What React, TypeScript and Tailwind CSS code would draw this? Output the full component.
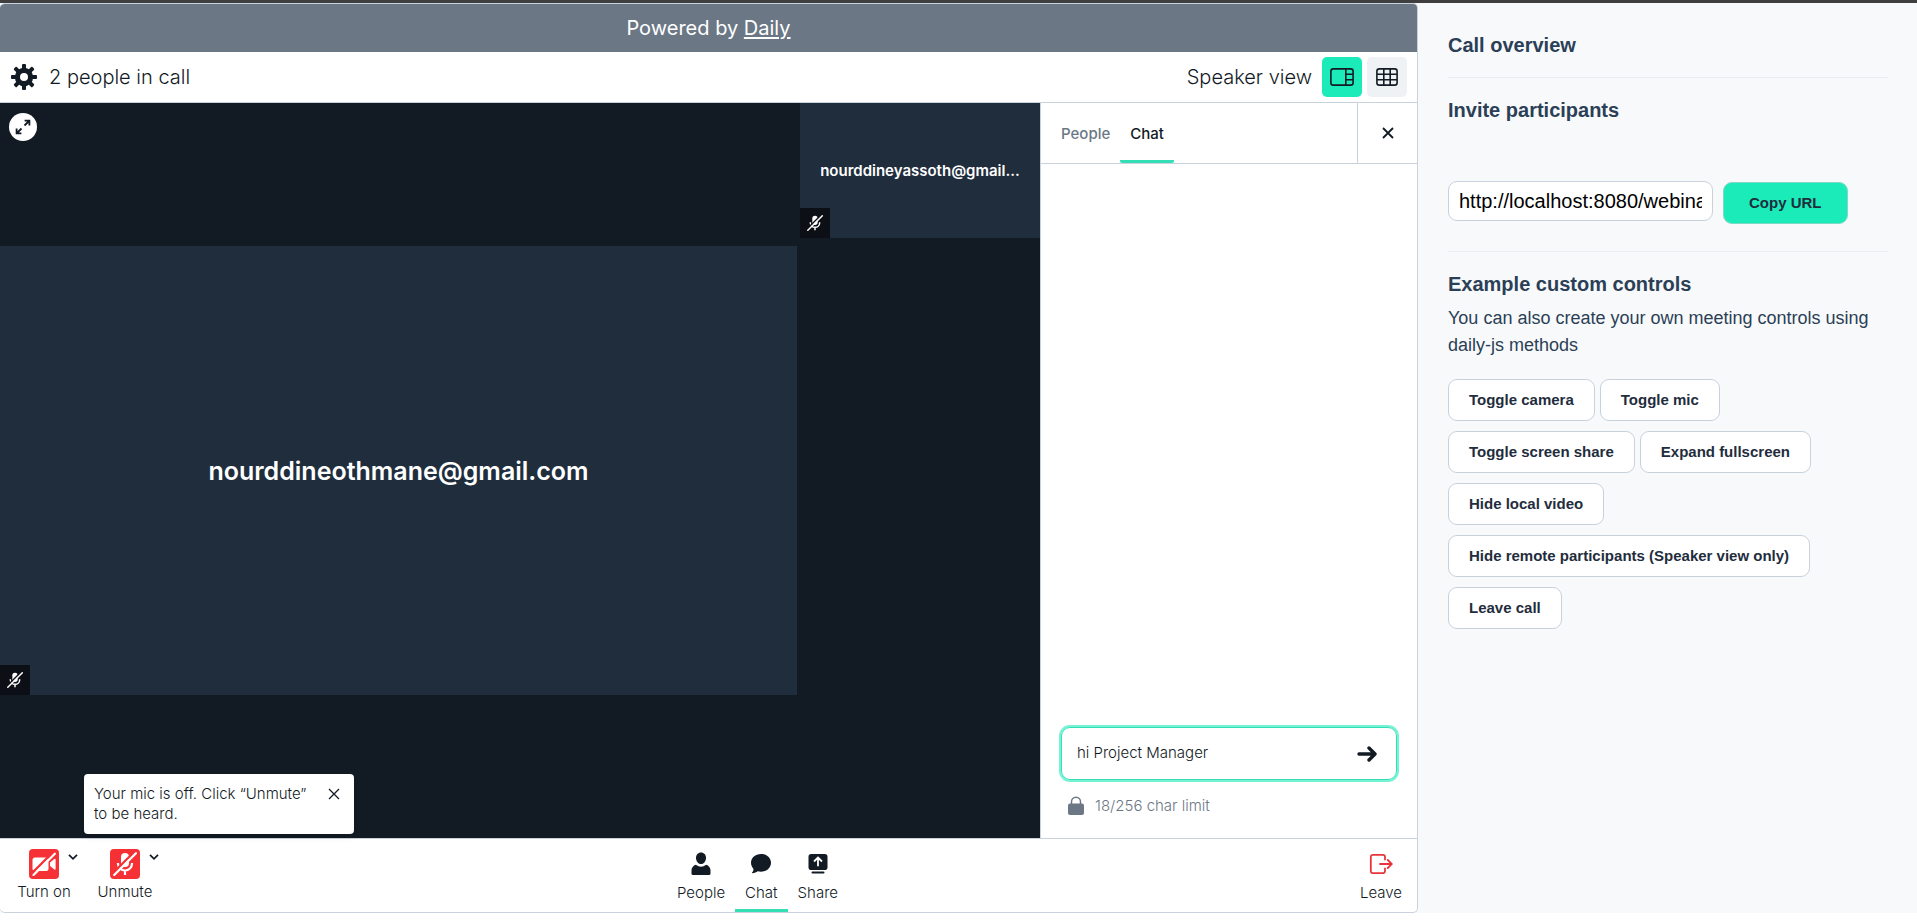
import { useState, type ReactNode } from 'react';

function GearIcon() {
  const teeth = [0, 45, 90, 135, 180, 225, 270, 315];
  return (
    <svg className="size-[26px]" viewBox="0 0 26 26" fill="#121a24" aria-hidden="true">
      {teeth.map((angle) => (
        <rect key={angle} x="11" y="0" width="4" height="6" rx="1" transform={`rotate(${angle} 13 13)`} />
      ))}
      <path
        fillRule="evenodd"
        d="M13 3.8a9.2 9.2 0 1 0 0 18.4a9.2 9.2 0 0 0 0-18.4ZM13 9a4 4 0 1 1 0 8a4 4 0 0 1 0-8Z"
      />
    </svg>
  );
}

function ExpandIcon() {
  return (
    <svg className="size-4" viewBox="0 0 16 16" fill="none" stroke="#121a24" strokeWidth="1.8" aria-hidden="true">
      <path d="M9.5 6.5 14 2M9.6 1.6h4.8v4.8M6.5 9.5 2 14M1.6 9.6v4.8h4.8" />
    </svg>
  );
}

function SpeakerViewIcon() {
  return (
    <svg className="h-[18px] w-6" viewBox="0 0 24 18" fill="none" stroke="#121a24" strokeWidth="1.6" aria-hidden="true">
      <rect x="0.9" y="0.9" width="22.2" height="16.2" rx="2.4" />
      <path d="M15.8 1v16M16 6.3h7M16 11.7h7" />
    </svg>
  );
}

function GridViewIcon() {
  return (
    <svg className="h-[18px] w-[22px]" viewBox="0 0 22 18" fill="none" stroke="#121a24" strokeWidth="1.6" aria-hidden="true">
      <rect x="0.9" y="0.9" width="20.2" height="16.2" rx="2.4" />
      <path d="M7.8 1v16M14.2 1v16M1 6.3h20M1 11.7h20" />
    </svg>
  );
}

function CloseIcon({ className, weight }: { className: string; weight: number }) {
  return (
    <svg className={className} viewBox="0 0 12 12" fill="none" stroke="#121a24" strokeWidth={weight} aria-hidden="true">
      <path d="m1 1 10 10M11 1 1 11" />
    </svg>
  );
}

function MicOffIcon({ className, background }: { className: string; background: string }) {
  return (
    <svg className={className} viewBox="0 0 24 24" fill="none" aria-hidden="true">
      <rect x="8" y="1" width="8" height="14" rx="4" fill="#fff" />
      <path d="M5 11v.5a7 7 0 0 0 14 0V11M12 18.5V23" stroke="#fff" strokeWidth="2.2" />
      <path d="M0 21.2 21.2 0" stroke={background} strokeWidth="2.4" />
      <path d="M1.2 23 23 1.2" stroke="#fff" strokeWidth="2.2" strokeLinecap="round" />
    </svg>
  );
}

function CameraOffIcon() {
  return (
    <svg className="size-6" viewBox="0 0 24 24" fill="none" aria-hidden="true">
      <rect x="0.5" y="5.5" width="16" height="13.5" rx="2.5" fill="#fff" />
      <path d="M18 10.5 22.3 7a.8.8 0 0 1 1.3.6v9.3a.8.8 0 0 1-1.3.6L18 14Z" fill="#fff" />
      <path d="M0 21.2 21.2 0" stroke="#f63135" strokeWidth="2.4" />
      <path d="M1.5 23 22.8 1.7" stroke="#fff" strokeWidth="2.2" strokeLinecap="round" />
    </svg>
  );
}

function ChevronIcon() {
  return (
    <svg className="h-[6px] w-[10px]" viewBox="0 0 10 6" fill="none" stroke="#121a24" strokeWidth="1.7" aria-hidden="true">
      <path d="m1 .8 4 4 4-4" />
    </svg>
  );
}

function PersonIcon() {
  return (
    <svg className="size-6" viewBox="0 0 24 24" fill="#121a24" aria-hidden="true">
      <path d="M12 .5c3 0 5 2.300 5 5.200 0 3.200-2 6.300-5 6.300S7 8.900 7 5.700C7 2.800 9 .5 12 .5Z" />
      <path d="M6.800 12.800a8.500 8.500 0 0 0 10.400 0c2.600.8 4.300 3 4.300 5.700v3.300c0 .7-.5 1.200-1.200 1.200H3.700c-.7 0-1.200-.5-1.200-1.200v-3.300c0-2.700 1.700-4.900 4.300-5.700Z" />
    </svg>
  );
}

function ChatIcon() {
  return (
    <svg className="size-6" viewBox="0 0 24 24" fill="#121a24" aria-hidden="true">
      <path d="M12 2c5.600 0 10 3.700 10 8.800s-4.400 8.900-10 8.900c-1.200 0-2.300-.1-3.300-.4-1.200 1-3.200 1.800-5.300 1.900-.4 0-.6-.4-.3-.7.9-1 1.400-2.300 1.400-3.600C3 15.300 2 13.200 2 10.800 2 5.700 6.400 2 12 2Z" />
    </svg>
  );
}

function ShareIcon() {
  return (
    <svg className="size-6" viewBox="0 0 24 24" fill="none" aria-hidden="true">
      <rect x="2.500" y="2" width="19" height="16" rx="2.800" fill="#121a24" />
      <path d="M12 14.300V6M8 9.500l4-4 4 4" stroke="#fff" strokeWidth="1.800" />
      <path d="M6.500 20.500h11" stroke="#121a24" strokeWidth="2" strokeLinecap="round" />
    </svg>
  );
}

function LeaveIcon() {
  return (
    <svg className="size-6" viewBox="0 0 24 24" fill="none" stroke="#e9343b" strokeWidth="1.8" strokeLinecap="round" aria-hidden="true">
      <path d="M16 7.500V5a2.200 2.200 0 0 0-2.200-2.200H4A2.200 2.200 0 0 0 1.800 5v14A2.200 2.200 0 0 0 4 21.200h9.800A2.200 2.200 0 0 0 16 19v-2.500" />
      <path d="M11 12h11.500M18.800 8l4 4-4 4" />
    </svg>
  );
}

function SendIcon() {
  return (
    <svg className="h-4 w-5" viewBox="0 0 20 16" fill="none" stroke="#121a24" strokeWidth="3.4" strokeLinecap="round" strokeLinejoin="round" aria-hidden="true">
      <path d="M2 8h15M12 2l6 6-6 6" />
    </svg>
  );
}

function LockIcon() {
  return (
    <svg className="h-5 w-4" viewBox="0 0 16 20" aria-hidden="true">
      <path d="M3.500 9V5.800a4.500 4.500 0 0 1 9 0V9" fill="none" stroke="#6b7785" strokeWidth="1.5" />
      <rect x="0" y="7.500" width="16" height="11.500" rx="2" fill="#6b7785" />
    </svg>
  );
}

function MutedBadge() {
  return (
    <span className="absolute bottom-0 left-0 flex size-[30px] items-center justify-center bg-[#0c1016]">
      <MicOffIcon className="size-4" background="#0c1016" />
    </span>
  );
}

function DeviceControl({ label, icon }: { label: string; icon: ReactNode }) {
  return (
    <div className="relative">
      <button type="button" className="flex w-16 flex-col items-center gap-[3px]">
        <span className="flex size-[30px] items-center justify-center rounded-[4px] bg-[#f63135]">{icon}</span>
        <span className="text-[15px] leading-5">{label}</span>
      </button>
      <button type="button" aria-label={`${label} options`} className="absolute top-0 left-[51px] flex h-4 w-5 items-center justify-center">
        <ChevronIcon />
      </button>
    </div>
  );
}

function TrayButton({ label, icon, active = false }: { label: string; icon: ReactNode; active?: boolean }) {
  return (
    <button
      type="button"
      className={`flex h-full flex-col items-center gap-[7px] border-b-[3px] px-[10px] pt-[13px] ${active ? 'border-[#35dfb6]' : 'border-transparent'}`}
    >
      {icon}
      <span className="text-[15px] leading-5">{label}</span>
    </button>
  );
}

function PanelButton({ children }: { children: ReactNode }) {
  return (
    <button type="button" className="h-[42px] rounded-[9px] border border-[#c8d1dc] bg-white px-5 text-[15px] font-bold text-[#1f2d3d]">
      {children}
    </button>
  );
}

function CallFrame() {
  const [message, setMessage] = useState('hi Project Manager');
  return (
    <main className="flex min-w-0 flex-1 flex-col overflow-hidden rounded-[5px] border-y border-r border-[#c8d1dc] bg-white font-['Inter','Liberation_Sans',sans-serif] font-light text-[#121a24]">
      <div className="flex h-12 shrink-0 items-center justify-center bg-[#6b7785] text-[20px] font-normal text-white">
        <p>
          Powered by{' '}
          <a href="#daily" className="underline underline-offset-2">
            Daily
          </a>
        </p>
      </div>

      <header className="flex h-[51px] shrink-0 items-center border-b border-[#c8d1dc] pr-[10px] pl-[11px] text-[20px]">
        <button type="button" aria-label="Settings">
          <GearIcon />
        </button>
        <p className="ml-3 flex-1">2 people in call</p>
        <p className="mr-[10px]">Speaker view</p>
        <button type="button" aria-label="Speaker view" className="mr-[5px] flex size-10 items-center justify-center rounded-[5px] bg-[#1bebb9]">
          <SpeakerViewIcon />
        </button>
        <button type="button" aria-label="Grid view" className="flex size-10 items-center justify-center rounded-[5px] bg-[#eff2f5]">
          <GridViewIcon />
        </button>
      </header>

      <div className="flex min-h-0 flex-1">
        <section aria-label="Video" className="relative flex min-w-0 flex-1 gap-[3px] bg-[#121a24] font-semibold text-white">
          <button type="button" aria-label="Fullscreen" className="absolute top-[10px] left-[9px] flex size-7 items-center justify-center rounded-full bg-white">
            <ExpandIcon />
          </button>
          <div className="flex min-w-0 flex-1 items-center">
            <div className="relative flex aspect-video w-full items-center justify-center bg-[#1f2d3d]">
              <p className="pt-[2px] text-[25px]">nourddineothmane@gmail.com</p>
              <MutedBadge />
            </div>
          </div>
          <div className="w-[240px] shrink-0">
            <div className="relative flex aspect-video w-full items-center justify-center bg-[#1f2d3d] px-4">
              <p className="truncate pt-[2px] text-[15px]">nourddineyassoth@gmail...</p>
              <MutedBadge />
            </div>
          </div>
        </section>

        <aside aria-label="Chat" className="flex w-[377px] shrink-0 flex-col border-l border-[#c8d1dc]">
          <div className="flex h-[61px] shrink-0 border-b border-[#c8d1dc] text-[15px] font-medium">
            <div className="flex flex-1 pl-[10px]">
              <button type="button" className="border-b-[3px] border-transparent px-[10px] pt-[5px] text-[#6b7785]">
                People
              </button>
              <button type="button" className="rounded-[2px] border-b-[3px] border-[#35dfb6] px-[10px] pt-[5px]">
                Chat
              </button>
            </div>
            <button type="button" aria-label="Close" className="flex w-[60px] items-center justify-center border-l border-[#c8d1dc]">
              <CloseIcon className="size-3" weight={1.8} />
            </button>
          </div>
          <div className="flex-1" />
          <form className="mx-5 flex h-[53px] items-center rounded-[9px] border border-[#35dfb6] pr-[19px] pl-[15px] ring-2 ring-[#76f3d5]" onSubmit={(e) => e.preventDefault()}>
            <input
              aria-label="Message"
              className="min-w-0 flex-1 bg-transparent text-[15px] font-light outline-none"
              value={message}
              onChange={(e) => setMessage(e.target.value)}
            />
            <button type="submit" aria-label="Send">
              <SendIcon />
            </button>
          </form>
          <div className="mt-4 mb-[22px] flex items-center gap-[11px] pl-[27px] text-[15px] leading-5 text-[#6b7785]">
            <LockIcon />
            <p>{message.length}/256 char limit</p>
          </div>
        </aside>
      </div>

      <footer className="relative flex h-[74px] shrink-0 justify-between border-t border-[#c8d1dc]">
        <div role="status" className="absolute bottom-full left-[84px] mb-[5px] flex h-[60px] w-[270px] items-start justify-between rounded-[4px] bg-white pt-[10px] pr-[14px] pl-[10px] text-[15px] leading-5 shadow-md">
          <p className="w-[222px]">
            Your mic is off. Click “Unmute”
            <br />
            to be heard.
          </p>
          <button type="button" aria-label="Dismiss" className="mt-1">
            <CloseIcon className="size-3" weight={1.3} />
          </button>
        </div>
        <div className="flex gap-[17px] pt-[10px] pr-2 pl-3">
          <DeviceControl label="Turn on" icon={<CameraOffIcon />} />
          <DeviceControl label="Unmute" icon={<MicOffIcon className="size-6" background="#f63135" />} />
        </div>
        <nav className="flex" aria-label="Call tools">
          <TrayButton label="People" icon={<PersonIcon />} />
          <TrayButton label="Chat" icon={<ChatIcon />} active />
          <TrayButton label="Share" icon={<ShareIcon />} />
        </nav>
        <div className="flex pr-[5px]">
          <TrayButton label="Leave" icon={<LeaveIcon />} />
        </div>
      </footer>
    </main>
  );
}

function OverviewPanel() {
  return (
    <aside aria-label="Call overview" className="w-[499px] shrink-0 bg-[#f8f9fb] pt-[27px] pr-[29px] pl-[30px] text-[#2b3f56]">
      <h2 className="text-[20px] leading-[30px] font-bold">Call overview</h2>
      <hr className="mt-[17px] border-[#e9ecf0]" />
      <h2 className="mt-[17px] text-[20px] leading-[30px] font-bold">Invite participants</h2>
      <div className="mt-[56px] flex gap-[10px]">
        <input
          aria-label="Meeting URL"
          readOnly
          value="http://localhost:8080/webinar"
          className="h-10 w-[265px] rounded-[9px] border border-[#c8d1dc] bg-white px-[10px] text-[20px] text-black"
        />
        <button type="button" className="mt-px h-[42px] rounded-[9px] border border-[#7fd9c6] bg-[#1bebb9] px-[25px] text-[15px] font-bold text-[#1f2d3d]">
          Copy URL
        </button>
      </div>
      <hr className="mt-[27px] border-[#e9ecf0]" />
      <h2 className="mt-[17px] text-[20px] leading-[30px] font-bold">Example custom controls</h2>
      <p className="mt-[6px] text-[18px] leading-[27px]">You can also create your own meeting controls using daily-js methods</p>
      <div className="mt-5 flex flex-col gap-[10px]">
        <div className="flex gap-[5px]">
          <PanelButton>Toggle camera</PanelButton>
          <PanelButton>Toggle mic</PanelButton>
        </div>
        <div className="flex gap-[5px]">
          <PanelButton>Toggle screen share</PanelButton>
          <PanelButton>Expand fullscreen</PanelButton>
        </div>
        <div className="flex">
          <PanelButton>Hide local video</PanelButton>
        </div>
        <div className="flex">
          <PanelButton>Hide remote participants (Speaker view only)</PanelButton>
        </div>
        <div className="flex">
          <PanelButton>Leave call</PanelButton>
        </div>
      </div>
    </aside>
  );
}

export default function App() {
  return (
    <div className="flex h-screen flex-col border-t-[3px] border-[#3f3f3f] bg-white pb-[9px] font-['Liberation_Sans',Arial,sans-serif]">
      <div className="flex min-h-0 flex-1 bg-[#f8f9fb]">
        <CallFrame />
        <OverviewPanel />
      </div>
    </div>
  );
}
